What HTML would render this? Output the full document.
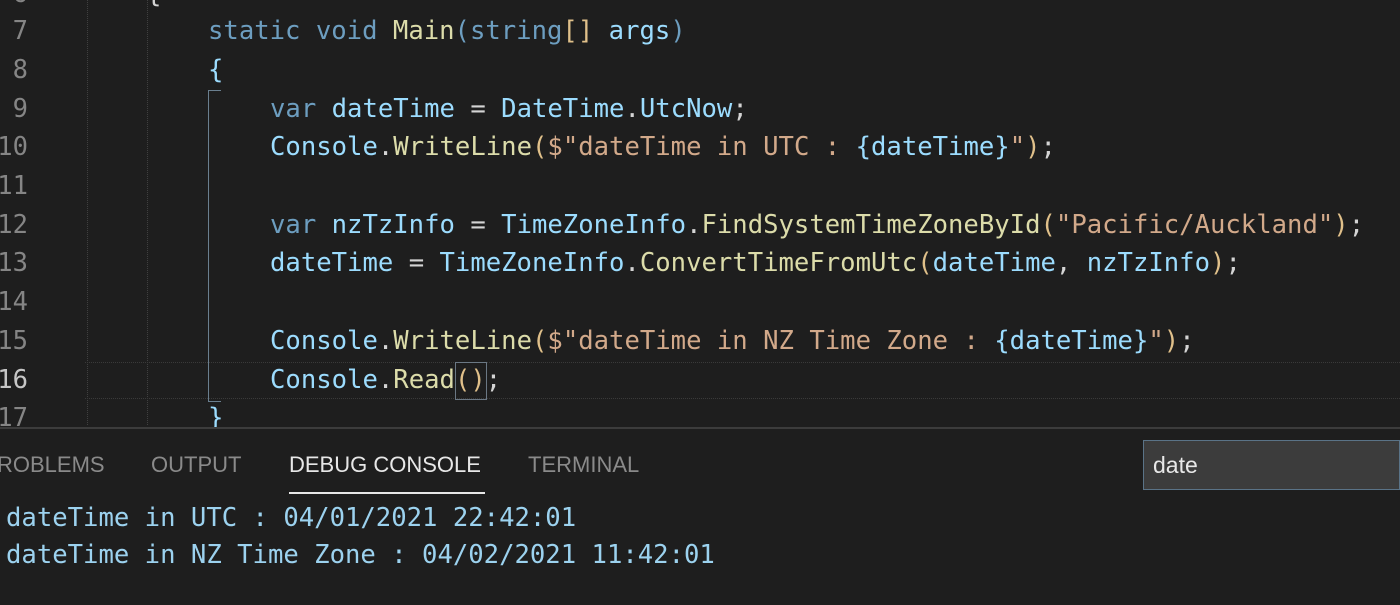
<!DOCTYPE html>
<html><head><meta charset="utf-8"><style>
body{margin:0;width:1400px;height:603px;background:#1e1e1e;overflow:hidden;position:relative;font-family:"DejaVu Sans Mono","Liberation Mono",monospace;}
.ln{position:absolute;left:-40px;width:68px;text-align:right;font-size:25.5px;color:#858585;}
.c{position:absolute;font-size:25.6px;white-space:pre;color:#d4d4d4;}
.k{color:#6d9ec0}.v{color:#9cdcfe}.f{color:#dcdcaa}.s{color:#d2a98a}.p{color:#d4d4d4}.b{color:#e0c08a}
.tab{position:absolute;top:452px;font-family:"Liberation Sans",sans-serif;font-size:22px;color:#8a8a8a;}
</style></head><body>
<div style="position:absolute;left:87px;top:0;height:425px;border-left:1px dotted #404040"></div>
<div style="position:absolute;left:147px;top:0;height:425px;border-left:1px dotted #404040"></div>
<div style="position:absolute;left:208px;top:90px;width:12px;height:310px;border-left:1px solid #6a7f8f;border-top:1px solid #6a7f8f;border-bottom:1px solid #6a7f8f;"></div>
<div style="position:absolute;left:85px;top:362px;width:1315px;height:35px;border-top:1px dotted #3a3a3a;border-bottom:1px dotted #3a3a3a"></div>
<div style="position:absolute;left:455px;top:362px;width:30px;height:36px;border:1px solid #6b7884"></div>

<div class="ln" style="top:-21px">6</div>
<div class="ln" style="top:16px">7</div>
<div class="ln" style="top:55px">8</div>
<div class="ln" style="top:94px">9</div>
<div class="ln" style="top:132px">10</div>
<div class="ln" style="top:171px">11</div>
<div class="ln" style="top:210px">12</div>
<div class="ln" style="top:248px">13</div>
<div class="ln" style="top:287px">14</div>
<div class="ln" style="top:326px">15</div>
<div class="ln" style="top:365px;color:#c6c6c6">16</div>
<div class="ln" style="top:403px">17</div>

<div class="c" style="left:146px;top:-21px"><span class="p">{</span></div>
<div class="c" style="left:208px;top:16px"><span class="k">static void </span><span class="f">Main</span><span class="k">(string</span><span class="b">[]</span> <span class="v">args</span><span class="k">)</span></div>
<div class="c" style="left:208px;top:55px"><span class="v">{</span></div>
<div class="c" style="left:270px;top:94px"><span class="k">var </span><span class="v">dateTime</span> = <span class="v">DateTime</span>.<span class="v">UtcNow</span>;</div>
<div class="c" style="left:270px;top:132px"><span class="v">Console</span>.<span class="f">WriteLine</span><span class="b">(</span><span class="s">$"dateTime in UTC : </span><span class="v">{dateTime}</span><span class="s">"</span><span class="b">)</span>;</div>
<div class="c" style="left:270px;top:210px"><span class="k">var </span><span class="v">nzTzInfo</span> = <span class="v">TimeZoneInfo</span>.<span class="f">FindSystemTimeZoneById</span><span class="b">(</span><span class="s">"Pacific/Auckland"</span><span class="b">)</span>;</div>
<div class="c" style="left:270px;top:248px"><span class="v">dateTime</span> = <span class="v">TimeZoneInfo</span>.<span class="f">ConvertTimeFromUtc</span><span class="b">(</span><span class="v">dateTime</span>, <span class="v">nzTzInfo</span><span class="b">)</span>;</div>
<div class="c" style="left:270px;top:326px"><span class="v">Console</span>.<span class="f">WriteLine</span><span class="b">(</span><span class="s">$"dateTime in NZ Time Zone : </span><span class="v">{dateTime}</span><span class="s">"</span><span class="b">)</span>;</div>
<div class="c" style="left:270px;top:365px"><span class="v">Console</span>.<span class="f">Read</span><span class="b">()</span>;</div>
<div class="c" style="left:208px;top:403px"><span class="v">}</span></div>

<div style="position:absolute;left:0;top:427px;width:1400px;height:176px;background:#1e1e1e;border-top:2px solid #3c3c3c"></div>
<div class="tab" style="left:-3px">ROBLEMS</div>
<div class="tab" style="left:151px">OUTPUT</div>
<div class="tab" style="left:289px;color:#e7e7e7">DEBUG CONSOLE</div>
<div style="position:absolute;left:289px;top:492px;width:196px;height:2px;background:#e7e7e7"></div>
<div class="tab" style="left:528px">TERMINAL</div>
<div style="position:absolute;left:1143px;top:440px;width:257px;height:50px;background:#3c3c3c;border:1px solid #5a7387;box-sizing:border-box"></div>
<div style="position:absolute;left:1153px;top:452px;font-family:'Liberation Sans',sans-serif;font-size:23px;color:#e8e8e8">date</div>
<div class="c" style="left:6px;top:503px;color:#9cd2ef">dateTime in UTC : 04/01/2021 22:42:01</div>
<div class="c" style="left:6px;top:540px;color:#9cd2ef">dateTime in NZ Time Zone : 04/02/2021 11:42:01</div>
</body></html>
